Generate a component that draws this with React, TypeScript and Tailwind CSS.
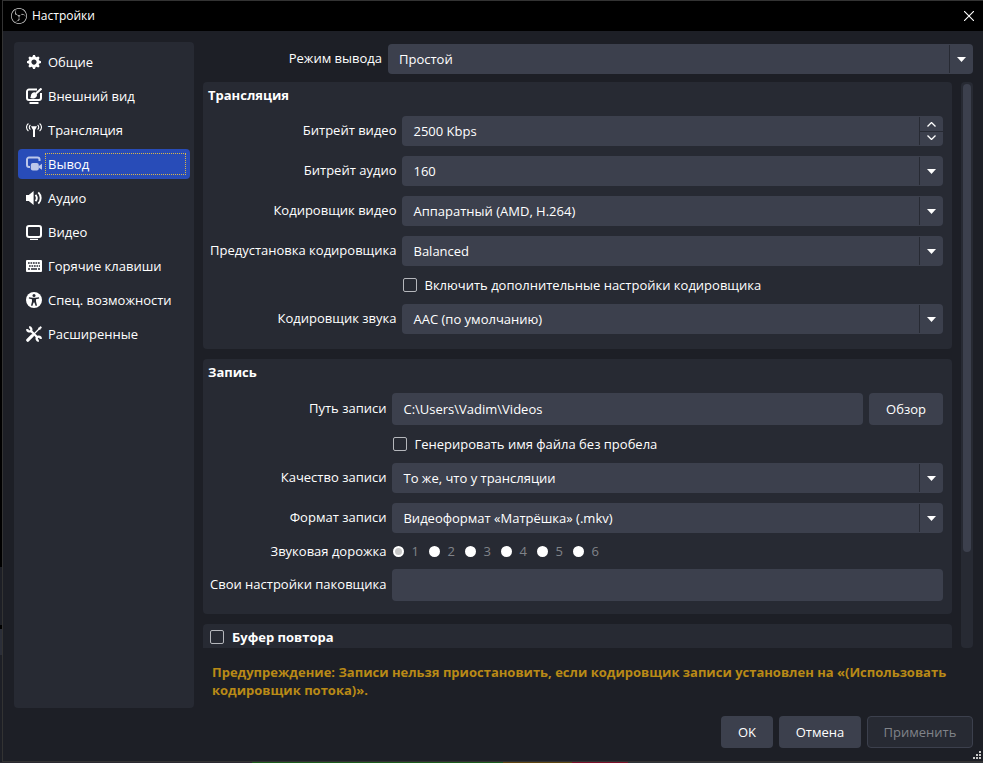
import type { ReactNode } from "react";
import clsx from "clsx";
import { SiObsstudio } from "react-icons/si";

const icons: Record<string, ReactNode> = {
  general: (
    <svg viewBox="0 0 8 8" className="size-3.5" fill="currentColor">
      <path d="M3.5 0l-.5 1.19c-.1.03-.19.08-.28.13l-1.19-.5-.72.72.5 1.19c-.05.1-.09.18-.13.28l-1.19.5v1l1.19.5c.04.1.08.18.13.28l-.5 1.19.72.72 1.19-.5c.09.04.18.09.28.13l.5 1.19h1l.5-1.19c.09-.04.19-.08.28-.13l1.19.5.72-.72-.5-1.19c.04-.09.09-.19.13-.28l1.19-.5v-1l-1.19-.5c-.03-.09-.08-.19-.13-.28l.5-1.19-.72-.72-1.19.5c-.09-.04-.19-.09-.28-.13l-.5-1.19h-1zm.5 2.5c.83 0 1.5.67 1.5 1.5s-.67 1.5-1.5 1.5-1.5-.67-1.5-1.5.67-1.5 1.5-1.5z" />
    </svg>
  ),
  appearance: (
    <svg viewBox="0 0 16 16" className="size-4" fill="none" stroke="currentColor">
      <path d="M11 1.500H3A2 2 0 0 0 1 3.500v6.500A2 2 0 0 0 3 12h10a2 2 0 0 0 2-2V5" strokeWidth="2" />
      <path d="M3.500 15h9" strokeWidth="2" />
      <path d="M4 9.800c1-.4.600-1.800 1.100-3.100C5.700 5 7.100 4.100 8.700 4.300L11 6.600c.2 2-1.200 3.600-3.300 3.800-1.400.1-2.800-.1-3.700-.6z" fill="currentColor" stroke="none" />
      <path d="M9.700 5.800L15.500.5" strokeWidth="2.200" />
    </svg>
  ),
  stream: (
    <svg viewBox="0 0 16 16" className="size-4" fill="none" stroke="currentColor">
      <path d="M2.400 1.500C-.1 3.500-.1 7 2.400 9M4.400 3c-1.500 1.300-1.500 3.200 0 4.500M13.600 1.500c2.500 2 2.500 5.500 0 7.500M11.600 3c1.500 1.300 1.500 3.200 0 4.500" strokeWidth="1.100" />
      <path d="M5 4.200h6L9 8v7H7V8z" fill="currentColor" stroke="none" />
    </svg>
  ),
  output: (
    <svg viewBox="0 0 16 16" className="size-4" fill="currentColor">
      <path d="M4 11H3a2 2 0 0 1-2-2V3.500a2 2 0 0 1 2-2h8.500a2 2 0 0 1 2 2V5" fill="none" stroke="currentColor" strokeWidth="2" />
      <rect x="4.800" y="7" width="8" height="7.500" rx="2" />
      <path d="M12.500 10.200L16 7.800v6l-3.500-2.400z" />
    </svg>
  ),
  audio: (
    <svg viewBox="0 0 16 16" className="size-4" fill="currentColor">
      <path d="M0 5h2.800L7.600 1v14L2.800 11H0z" />
      <path d="M9.500 4.800c1.500 1.800 1.500 4.600 0 6.400M12.300 2.300c3.200 3.200 3.200 8.200 0 11.400" fill="none" stroke="currentColor" strokeWidth="1.900" />
    </svg>
  ),
  video: (
    <svg viewBox="0 0 16 16" className="size-4" fill="none" stroke="currentColor">
      <rect x="1" y="2" width="14" height="11" rx="2" strokeWidth="2" />
      <path d="M4 15.400h8" strokeWidth="1.200" />
    </svg>
  ),
  hotkeys: (
    <svg viewBox="0 0 16 16" className="size-4">
      <rect y="2" width="16" height="12" rx="1" fill="currentColor" />
      <g stroke="#272a33" strokeWidth="1.700" fill="none">
        <path d="M2 5h12" strokeDasharray="1.700 .8" />
        <path d="M3 8h11" strokeDasharray="1.700 .8" />
        <path d="M2 11h2M5 11h6M12 11h2" />
      </g>
    </svg>
  ),
  accessibility: (
    <svg viewBox="0 0 16 16" className="size-4">
      <circle cx="8" cy="8" r="8" fill="currentColor" />
      <g fill="#272a33">
        <circle cx="8" cy="3.500" r="1.500" />
        <path d="M3 5.200l3.500.5h3l3.500-.5.2 1.200-3.200.9v2.200l1 4-1.300.4L8.400 10.400h-.8L6.300 13.900 5 13.500l1-4V7.300l-3.200-.9z" />
      </g>
    </svg>
  ),
  advanced: (
    <svg viewBox="0 0 16 16" className="size-4" fill="none" stroke="currentColor">
      <path d="M1.800 14.200l4.500-4.500" strokeWidth="3.200" strokeLinecap="round" />
      <path d="M7 9l6-6" strokeWidth="1.300" />
      <path d="M12.200 2.200L14.800.5l.8.8-1.700 2.500z" fill="currentColor" strokeWidth=".6" />
      <path d="M4.500 4.500l7.500 7.500" strokeWidth="2.300" />
      <path d="M3.200 1.100a2.400 2.400 0 0 1 1.500 4A2.400 2.400 0 0 1 1.100 3.200M12.800 14.900a2.400 2.400 0 0 1-1.500-4 2.400 2.400 0 0 1 3.600 1.900" strokeWidth="2.300" />
    </svg>
  ),
};

const sections = [
  { id: "general", name: "Общие" },
  { id: "appearance", name: "Внешний вид" },
  { id: "stream", name: "Трансляция" },
  { id: "output", name: "Вывод" },
  { id: "audio", name: "Аудио" },
  { id: "video", name: "Видео" },
  { id: "hotkeys", name: "Горячие клавиши" },
  { id: "accessibility", name: "Спец. возможности" },
  { id: "advanced", name: "Расширенные" },
];

const tracks = [1, 2, 3, 4, 5, 6];

function Select({ id, value }: { id: string; value: string }) {
  return (
    <div className="relative w-full">
      <select
        id={id}
        className="block h-[30px] w-full appearance-none rounded bg-[#3c404d] pr-8 pl-[11px]"
      >
        <option>{value}</option>
      </select>
      <span className="pointer-events-none absolute inset-y-px right-0 flex w-6 items-center justify-center border-l border-[#272a33]">
        <svg viewBox="0 0 9 5" className="h-[5px] w-[9px]" fill="#fff">
          <path d="M0 0h9L4.500 5z" />
        </svg>
      </span>
    </div>
  );
}

function Label({ id, children }: { id: string; children: ReactNode }) {
  return (
    <label htmlFor={id} className="pb-0.5 text-right whitespace-nowrap">
      {children}
    </label>
  );
}

function Tick({ id }: { id: string }) {
  return (
    <input
      id={id}
      type="checkbox"
      className="size-3.5 shrink-0 appearance-none rounded-xs border border-[#b5b7bc] checked:bg-[#284cb8]"
    />
  );
}

function Check({ id, children }: { id: string; children: ReactNode }) {
  return (
    <div className="col-start-2 flex h-[18px] items-center gap-[7px] pl-px">
      <Tick id={id} />
      <label htmlFor={id}>{children}</label>
    </div>
  );
}

function Group({ title, children }: { title: string; children: ReactNode }) {
  return (
    <section className="shrink-0 rounded bg-[#272a33] pb-[15px] last-of-type:pb-0 nth-of-type-[2]:pb-[13px]">
      <h2 className="h-[34px] pt-1 pl-[5px] font-bold">{title}</h2>
      <div className="grid grid-cols-[auto_1fr] items-center gap-x-1.5 gap-y-2.5 pr-[9px] pl-[7px]">
        {children}
      </div>
    </section>
  );
}

function App() {
  return (
    <div className="flex h-screen flex-col overflow-hidden bg-black font-['Open_Sans',sans-serif] text-[13px] leading-[18px] text-white">
      <div className="flex min-h-0 flex-1">
        <div className="flex w-0.5 shrink-0 flex-col">
          <span className="flex-[566]" />
          <span className="flex-[58] bg-[#1d1f26]" />
          <span className="flex-[4] bg-black" />
          <span className="flex-[26] bg-[#2b2e38]" />
          <span className="flex-[107] bg-[#1d1f26]" />
        </div>
        <div className="flex min-w-0 flex-1 flex-col border-t border-b border-l border-[#333333] bg-[#1d1f26]">
          <header className="flex h-[30px] shrink-0 items-center bg-black px-2">
            <SiObsstudio className="size-4 text-[#d0d0d0]" />
            <h1 className="ml-[5px] flex-1 text-xs">Настройки</h1>
            <button aria-label="Закрыть" className="p-px">
              <svg viewBox="0 0 10 10" className="size-2.5" stroke="#fff" strokeWidth="1.100">
                <path d="M0 0l10 10M10 0L0 10" />
              </svg>
            </button>
          </header>

          <main className="flex min-h-0 flex-1 gap-[9px] pt-[11px] pr-2.5 pl-[11px]">
            <nav className="flex w-[180px] shrink-0 flex-col gap-1 rounded bg-[#272a33] px-1 py-[5px]">
              {sections.map((s) => (
                <button
                  key={s.id}
                  className={clsx(
                    "flex h-[30px] items-center rounded pr-1 pl-2 text-left",
                    s.id === "output" && "bg-[#284cb8]",
                  )}
                >
                  <span
                    className={clsx(
                      "flex w-4 justify-center",
                      s.id === "output" && "text-[#bcc7ea]",
                    )}
                  >
                    {icons[s.id]}
                  </span>
                  <span
                    className={clsx(
                      "ml-[3px] flex-1 border border-dotted py-px pl-0.5",
                      s.id === "output" ? "border-[#d9b84a]" : "border-transparent",
                    )}
                  >
                    {s.name}
                  </span>
                </button>
              ))}
            </nav>

            <div className="flex min-w-0 flex-1 flex-col pt-0.5">
              <div className="flex items-center gap-1.5">
                <div className="flex w-[179px] shrink-0 flex-col">
                  <Label id="mode">Режим вывода</Label>
                </div>
                <Select id="mode" value="Простой" />
              </div>

              <div className="mt-2 flex min-h-0 flex-1 gap-[9px]">
                <div className="flex min-w-0 flex-1 flex-col gap-2.5 overflow-hidden">
                  <Group title="Трансляция">
                    <Label id="vbitrate">Битрейт видео</Label>
                    <div className="flex h-[30px] rounded bg-[#3c404d] py-px">
                      <input
                        id="vbitrate"
                        defaultValue="2500 Kbps"
                        className="min-w-0 flex-1 pl-[11px]"
                      />
                      <div className="flex w-6 flex-col divide-y divide-[#272a33] border-l border-[#272a33]">
                        <button aria-label="Больше" className="flex flex-1 items-center justify-center pt-px">
                          <svg viewBox="0 0 9 5" className="h-[5px] w-[9px]" fill="none" stroke="#fff" strokeWidth="1.300">
                            <path d="M.5 4.500l4-4 4 4" />
                          </svg>
                        </button>
                        <button aria-label="Меньше" className="flex flex-1 items-center justify-center pb-px">
                          <svg viewBox="0 0 9 5" className="h-[5px] w-[9px]" fill="none" stroke="#fff" strokeWidth="1.300">
                            <path d="M.5.5l4 4 4-4" />
                          </svg>
                        </button>
                      </div>
                    </div>
                    <Label id="abitrate">Битрейт аудио</Label>
                    <Select id="abitrate" value="160" />
                    <Label id="vencoder">Кодировщик видео</Label>
                    <Select id="vencoder" value="Аппаратный (AMD, H.264)" />
                    <Label id="preset">Предустановка кодировщика</Label>
                    <Select id="preset" value="Balanced" />
                    <Check id="extra">Включить дополнительные настройки кодировщика</Check>
                    <Label id="aencoder">Кодировщик звука</Label>
                    <Select id="aencoder" value="AAC (по умолчанию)" />
                  </Group>

                  <Group title="Запись">
                    <Label id="path">Путь записи</Label>
                    <div className="flex gap-1.5">
                      <input
                        id="path"
                        defaultValue="C:\Users\Vadim\Videos"
                        className="h-8 min-w-0 flex-1 rounded bg-[#3c404d] px-[11px]"
                      />
                      <button className="w-[74px] rounded bg-[#3c404d]">Обзор</button>
                    </div>
                    <Check id="nospace">Генерировать имя файла без пробела</Check>
                    <Label id="quality">Качество записи</Label>
                    <Select id="quality" value="То же, что у трансляции" />
                    <Label id="format">Формат записи</Label>
                    <Select id="format" value="Видеоформат «Матрёшка» (.mkv)" />
                    <span className="text-right leading-4">Звуковая дорожка</span>
                    <div className="flex h-4 items-center pl-px">
                      {tracks.map((n) => (
                        <label key={n} className="flex w-9 items-center gap-[7px] text-[#808389]">
                          <input
                            type="radio"
                            name="track"
                            defaultChecked={n === 1}
                            className="size-[11px] appearance-none rounded-full border-2 border-white bg-white checked:bg-[#c8c8c8]"
                          />
                          {n}
                        </label>
                      ))}
                    </div>
                    <Label id="muxer">Свои настройки паковщика</Label>
                    <input id="muxer" className="h-8 w-full rounded bg-[#3c404d] px-[11px]" />
                  </Group>

                  <section className="h-14 shrink-0 rounded bg-[#272a33] pt-1 pl-[7px]">
                    <div className="flex items-center gap-2 font-bold">
                      <Tick id="replay" />
                      <label htmlFor="replay">Буфер повтора</label>
                    </div>
                  </section>
                </div>
                <div className="w-3 shrink-0 rounded bg-[#272a33] p-0.5">
                  <div className="h-5/6 rounded bg-[#3c404d]" />
                </div>
              </div>

              <p className="mt-[15px] mb-[9px] px-[9px] font-bold text-[#b98a16]">
                Предупреждение: Записи нельзя приостановить, если кодировщик записи
                установлен на «(Использовать кодировщик потока)».
              </p>
            </div>
          </main>

          <footer className="relative flex shrink-0 justify-end gap-1.5 pt-2 pr-2.5 pb-[13px]">
            <button className="h-8 w-[52px] rounded bg-[#3c404d]">OK</button>
            <button className="h-8 w-[82px] rounded bg-[#3c404d]">Отмена</button>
            <button disabled className="h-8 w-[106px] rounded border border-[#3c404d] bg-[#272a33] text-[#808389]">
              Применить
            </button>
            <svg viewBox="0 0 8 8" className="absolute right-0.5 bottom-0.5 size-2" fill="#c8c8c8">
              <path d="M6 0h2v2H6zM6 3h2v2H6zM3 3h2v2H3zM0 6h2v2H0zM3 6h2v2H3zM6 6h2v2H6z" />
            </svg>
          </footer>
        </div>
      </div>
      <div className="flex h-px shrink-0">
        <span className="flex-[252] bg-[#2a2930]" />
        <span className="flex-[251] bg-[#1c5a1c]" />
        <span className="flex-[69] bg-[#5c4410]" />
        <span className="flex-[56] bg-[#7a1028]" />
        <span className="flex-[355] bg-[#2f3237]" />
      </div>
    </div>
  );
}

export default App;
